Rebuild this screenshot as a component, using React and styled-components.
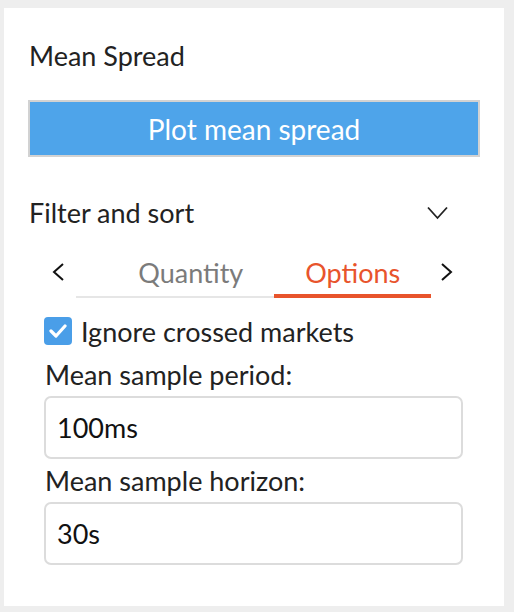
import { useEffect, useRef } from "react"
import styled, { createGlobalStyle } from "styled-components"

const GlobalStyle = createGlobalStyle`
    body {
        margin: 0;
        background: #eeeeee;
        font-family: Lato, "Source Sans Pro", "Noto Sans", sans-serif;
        color: #222;
    }
`

const Panel = styled.div`
    margin: 8px 10px 0 4px;
    background: white;
    padding: 31px 24px 40px 24px;
    box-sizing: border-box;
    height: 598px;
`

const Heading = styled.h3`
    margin: 0 0 0 1px;
    font-size: 27px;
    font-weight: 400;
    line-height: 34px;
`

const PlotButton = styled.button`
    display: block;
    width: 452px;
    height: 57px;
    margin-top: 27px;
    background: #4ea4ea;
    color: white;
    border: 2px solid #d2d2d2;
    font-family: inherit;
    font-size: 28px;
    padding: 0;
`

const SectionHeader = styled.div`
    display: flex;
    align-items: center;
    justify-content: space-between;
    margin-top: 39px;
    padding: 0 32px 0 1px;
    font-size: 27px;
    line-height: 34px;
`

const SectionBody = styled.div`
    padding: 0 17px 0 16px;
`

const TabRow = styled.div`
    display: flex;
    align-items: flex-end;
    margin-top: 20px;
    height: 48px;
`

const ArrowButton = styled.button`
    width: 32px;
    height: 48px;
    background: none;
    border: none;
    padding: 0 ${p => (p.$side === "left" ? "4px" : "0")} 4px ${p => (p.$side === "right" ? "0" : "0")};
    display: flex;
    align-items: center;
    justify-content: center;
    color: #111;
`

const TabList = styled.div`
    flex: 1;
    display: flex;
    overflow: hidden;
    height: 48px;
`

const Tab = styled.div`
    flex: none;
    padding: 0 31px;
    display: flex;
    align-items: center;
    font-size: 27px;
    color: ${p => (p.$active ? "#e8542c" : "#7b7b7b")};
    border-bottom: ${p => (p.$active ? "4px solid #e8542c" : "2px solid #e6e6e6")};
    box-sizing: border-box;
    padding-bottom: ${p => (p.$active ? "0" : "1px")};
`

const CheckRow = styled.label`
    display: flex;
    align-items: center;
    gap: 9px;
    height: 30px;
    margin-top: 18px;
    font-size: 27px;
`

const CheckBox = styled.span`
    width: 28px;
    height: 28px;
    border-radius: 4px;
    background: #4a9ee8;
    display: flex;
    align-items: center;
    justify-content: center;
`

const FieldLabel = styled.div`
    margin-top: ${p => p.$gap}px;
    margin-left: 1px;
    font-size: 27px;
    line-height: 34px;
`

const Input = styled.input`
    display: block;
    width: 419px;
    height: 63px;
    margin-top: 4px;
    box-sizing: border-box;
    border: 2px solid #dcdcdc;
    border-radius: 7px;
    padding: 0 11px;
    font-family: inherit;
    font-size: 27px;
    color: #111;
    outline: none;
`

const Footer = styled.div`
    padding: 3px 10px;
    font-size: 15px;
    color: #555;

    a {
        color: #4a9ee8;
        text-decoration: none;
    }
`

const tabs = ["Price range", "Quantity", "Options"]

const App = () => {
    const listRef = useRef(null)

    useEffect(() => {
        const el = listRef.current
        el.scrollLeft = el.scrollWidth - el.clientWidth
    }, [])

    return (
        <>
            <GlobalStyle />
            <Panel>
                <Heading>Mean Spread</Heading>
                <PlotButton>Plot mean spread</PlotButton>
                <SectionHeader>
                    <span>Filter and sort</span>
                    <svg width="21" height="14" viewBox="0 0 21 14">
                        <path d="M1 1.5 L10.5 12 L20 1.5" fill="none" stroke="#222" strokeWidth="1.8" />
                    </svg>
                </SectionHeader>
                <SectionBody>
                    <TabRow>
                        <ArrowButton $side="left">
                            <svg width="12" height="18" viewBox="0 0 12 18">
                                <path d="M11 1 L2 9 L11 17" fill="none" stroke="#111" strokeWidth="2" />
                            </svg>
                        </ArrowButton>
                        <TabList ref={listRef}>
                            {tabs.map(t => (
                                <Tab key={t} $active={t === "Options"}>{t}</Tab>
                            ))}
                        </TabList>
                        <ArrowButton $side="right">
                            <svg width="12" height="18" viewBox="0 0 12 18">
                                <path d="M1 1 L10 9 L1 17" fill="none" stroke="#111" strokeWidth="2" />
                            </svg>
                        </ArrowButton>
                    </TabRow>
                    <CheckRow>
                        <CheckBox>
                            <svg width="18" height="14" viewBox="0 0 18 14">
                                <path d="M2 7 L7 12 L16 2" fill="none" stroke="white" strokeWidth="3.2" strokeLinecap="round" strokeLinejoin="round" />
                            </svg>
                        </CheckBox>
                        Ignore crossed markets
                    </CheckRow>
                    <FieldLabel $gap={12}>Mean sample period:</FieldLabel>
                    <Input defaultValue="100ms" />
                    <FieldLabel $gap={5}>Mean sample horizon:</FieldLabel>
                    <Input defaultValue="30s" />
                </SectionBody>
            </Panel>
            <Footer>
                Copyright HubITY | Layout by <a href="#">Flatiron</a>
            </Footer>
        </>
    )
}

export default App
